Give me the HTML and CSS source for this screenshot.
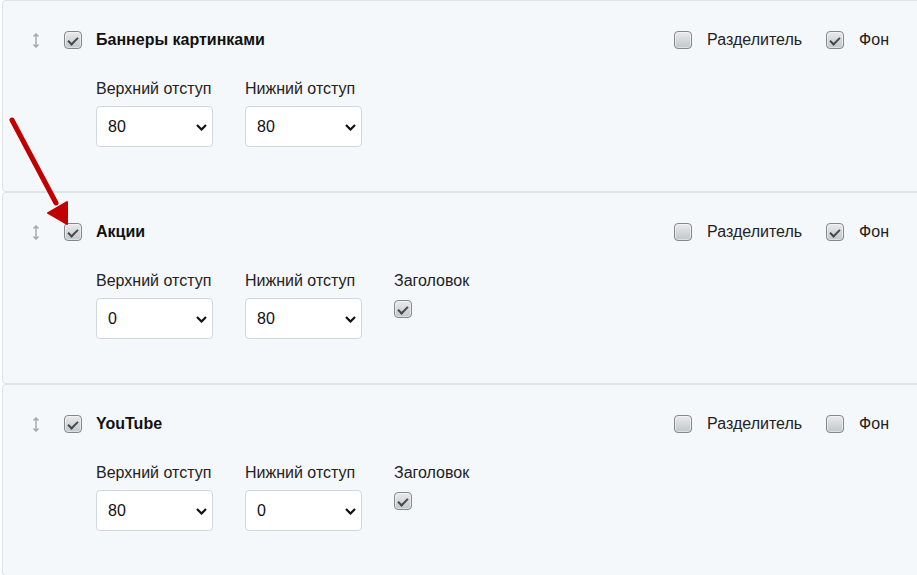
FILE: index.html
```html
<!DOCTYPE html>
<html lang="ru">
<head>
    <meta charset="UTF-8">
    <title>Блоки главной страницы</title>
    <link rel="stylesheet" href="styles.css">
</head>
<body>

    <!-- Blocks list -->
    <div class="blocks">

        <div class="block">
            <div class="block-head">
                <span class="drag">
                    <svg width="8" height="15" viewBox="0 0 8 15"><path d="M4 1v13M1.5 3.5L4 1l2.5 2.5M1.5 11.5L4 14l2.5-2.5" fill="none" stroke="#a6aaad" stroke-width="1.5"/></svg>
                </span>
                <span class="check on"></span>
                <span class="block-title">Баннеры картинками</span>
                <div class="opts">
                    <span class="check"></span>
                    <span class="opt-label">Разделитель</span>
                    <span class="check on"></span>
                    <span class="opt-label">Фон</span>
                </div>
            </div>
            <div class="fields">
                <div class="field">
                    <label>Верхний отступ</label>
                    <div class="select-wrap">
                        <select><option>80</option></select>
                        <svg class="chevron" width="11" height="7" viewBox="0 0 11 7"><path d="M1 1l4.5 4.5L10 1" fill="none" stroke="#111" stroke-width="2.2"/></svg>
                    </div>
                </div>
                <div class="field">
                    <label>Нижний отступ</label>
                    <div class="select-wrap">
                        <select><option>80</option></select>
                        <svg class="chevron" width="11" height="7" viewBox="0 0 11 7"><path d="M1 1l4.5 4.5L10 1" fill="none" stroke="#111" stroke-width="2.2"/></svg>
                    </div>
                </div>
            </div>
        </div>

        <div class="block">
            <div class="block-head">
                <span class="drag">
                    <svg width="8" height="15" viewBox="0 0 8 15"><path d="M4 1v13M1.5 3.5L4 1l2.5 2.5M1.5 11.5L4 14l2.5-2.5" fill="none" stroke="#a6aaad" stroke-width="1.5"/></svg>
                </span>
                <span class="check on"></span>
                <span class="block-title">Акции</span>
                <div class="opts">
                    <span class="check"></span>
                    <span class="opt-label">Разделитель</span>
                    <span class="check on"></span>
                    <span class="opt-label">Фон</span>
                </div>
            </div>
            <div class="fields">
                <div class="field">
                    <label>Верхний отступ</label>
                    <div class="select-wrap">
                        <select><option>0</option></select>
                        <svg class="chevron" width="11" height="7" viewBox="0 0 11 7"><path d="M1 1l4.5 4.5L10 1" fill="none" stroke="#111" stroke-width="2.2"/></svg>
                    </div>
                </div>
                <div class="field">
                    <label>Нижний отступ</label>
                    <div class="select-wrap">
                        <select><option>80</option></select>
                        <svg class="chevron" width="11" height="7" viewBox="0 0 11 7"><path d="M1 1l4.5 4.5L10 1" fill="none" stroke="#111" stroke-width="2.2"/></svg>
                    </div>
                </div>
                <div class="field">
                    <label>Заголовок</label>
                    <span class="check on field-check"></span>
                </div>
            </div>
        </div>

        <div class="block">
            <div class="block-head">
                <span class="drag">
                    <svg width="8" height="15" viewBox="0 0 8 15"><path d="M4 1v13M1.5 3.5L4 1l2.5 2.5M1.5 11.5L4 14l2.5-2.5" fill="none" stroke="#a6aaad" stroke-width="1.5"/></svg>
                </span>
                <span class="check on"></span>
                <span class="block-title">YouTube</span>
                <div class="opts">
                    <span class="check"></span>
                    <span class="opt-label">Разделитель</span>
                    <span class="check"></span>
                    <span class="opt-label">Фон</span>
                </div>
            </div>
            <div class="fields">
                <div class="field">
                    <label>Верхний отступ</label>
                    <div class="select-wrap">
                        <select><option>80</option></select>
                        <svg class="chevron" width="11" height="7" viewBox="0 0 11 7"><path d="M1 1l4.5 4.5L10 1" fill="none" stroke="#111" stroke-width="2.2"/></svg>
                    </div>
                </div>
                <div class="field">
                    <label>Нижний отступ</label>
                    <div class="select-wrap">
                        <select><option>0</option></select>
                        <svg class="chevron" width="11" height="7" viewBox="0 0 11 7"><path d="M1 1l4.5 4.5L10 1" fill="none" stroke="#111" stroke-width="2.2"/></svg>
                    </div>
                </div>
                <div class="field">
                    <label>Заголовок</label>
                    <span class="check on field-check"></span>
                </div>
            </div>
        </div>

    </div>

    <!-- Red pointer arrow -->
    <svg class="pointer" width="80" height="120" viewBox="0 0 80 120">
        <path d="M12 10L56 93" stroke="#c00000" stroke-width="5" stroke-linecap="round"/>
        <path d="M48 103L67 92L67 114Z" fill="#c00000" stroke="#c00000" stroke-width="2" stroke-linejoin="round"/>
    </svg>

</body>
</html>
```

FILE: styles.css
```css
/* General Page Styling */
body {
    margin: 0;
    background: #ffffff;
    color: #1a1a1a;
    font-family: "Liberation Sans", Arial, sans-serif;
    font-size: 16px;
    overflow: hidden;
}

/* Blocks list */
.blocks {
    padding-left: 2px;
}

.block {
    height: 190px;
    background: #f5f8fa;
    border: 1px solid #dde5ea;
    border-right: none;
    border-radius: 4px 0 0 4px;
}

.block-head {
    display: flex;
    align-items: center;
    height: 20px;
    margin-top: 29px;
    padding-right: 28px;
}

.drag {
    width: 61px;
    padding-left: 29px;
    box-sizing: border-box;
    display: flex;
    align-items: center;
}

.block-title {
    margin-left: 14px;
    font-weight: bold;
    color: #111;
}

.opts {
    margin-left: auto;
    display: flex;
    align-items: center;
}

.opt-label {
    margin-left: 15px;
    margin-right: 24px;
    color: #222;
}

.opt-label:last-child {
    margin-right: 0;
}

/* Checkboxes */
.check {
    position: relative;
    width: 18px;
    height: 18px;
    box-sizing: border-box;
    border: 1px solid #83888c;
    border-radius: 4px;
    background: linear-gradient(#e8eaec, #c3c7ca);
    box-shadow: inset 0 0 0 1px rgba(255, 255, 255, 0.45);
    flex-shrink: 0;
}

.check.on::after {
    content: "";
    position: absolute;
    left: 3px;
    top: 2px;
    width: 8px;
    height: 4px;
    border-left: 2px solid #45494d;
    border-bottom: 2px solid #45494d;
    transform: translate(0, 3px) rotate(-45deg);
}

/* Fields */
.fields {
    display: flex;
    gap: 32px;
    padding-left: 93px;
    margin-top: 30px;
}

.field {
    display: flex;
    flex-direction: column;
    align-items: flex-start;
}

.field label {
    height: 18px;
    line-height: 18px;
    margin-bottom: 8px;
    color: #222;
}

.field-check {
    margin-top: 2px;
}

.select-wrap {
    position: relative;
}

select {
    appearance: none;
    -webkit-appearance: none;
    width: 117px;
    height: 41px;
    padding: 0 0 0 11px;
    border: 1px solid #d0d8de;
    border-radius: 4px;
    background: #ffffff;
    color: #111;
    font-family: "Liberation Sans", Arial, sans-serif;
    font-size: 16px;
}

.chevron {
    position: absolute;
    right: 6px;
    top: 18px;
    pointer-events: none;
}

/* Red pointer arrow */
.pointer {
    position: absolute;
    left: 0;
    top: 110px;
    pointer-events: none;
}
```
